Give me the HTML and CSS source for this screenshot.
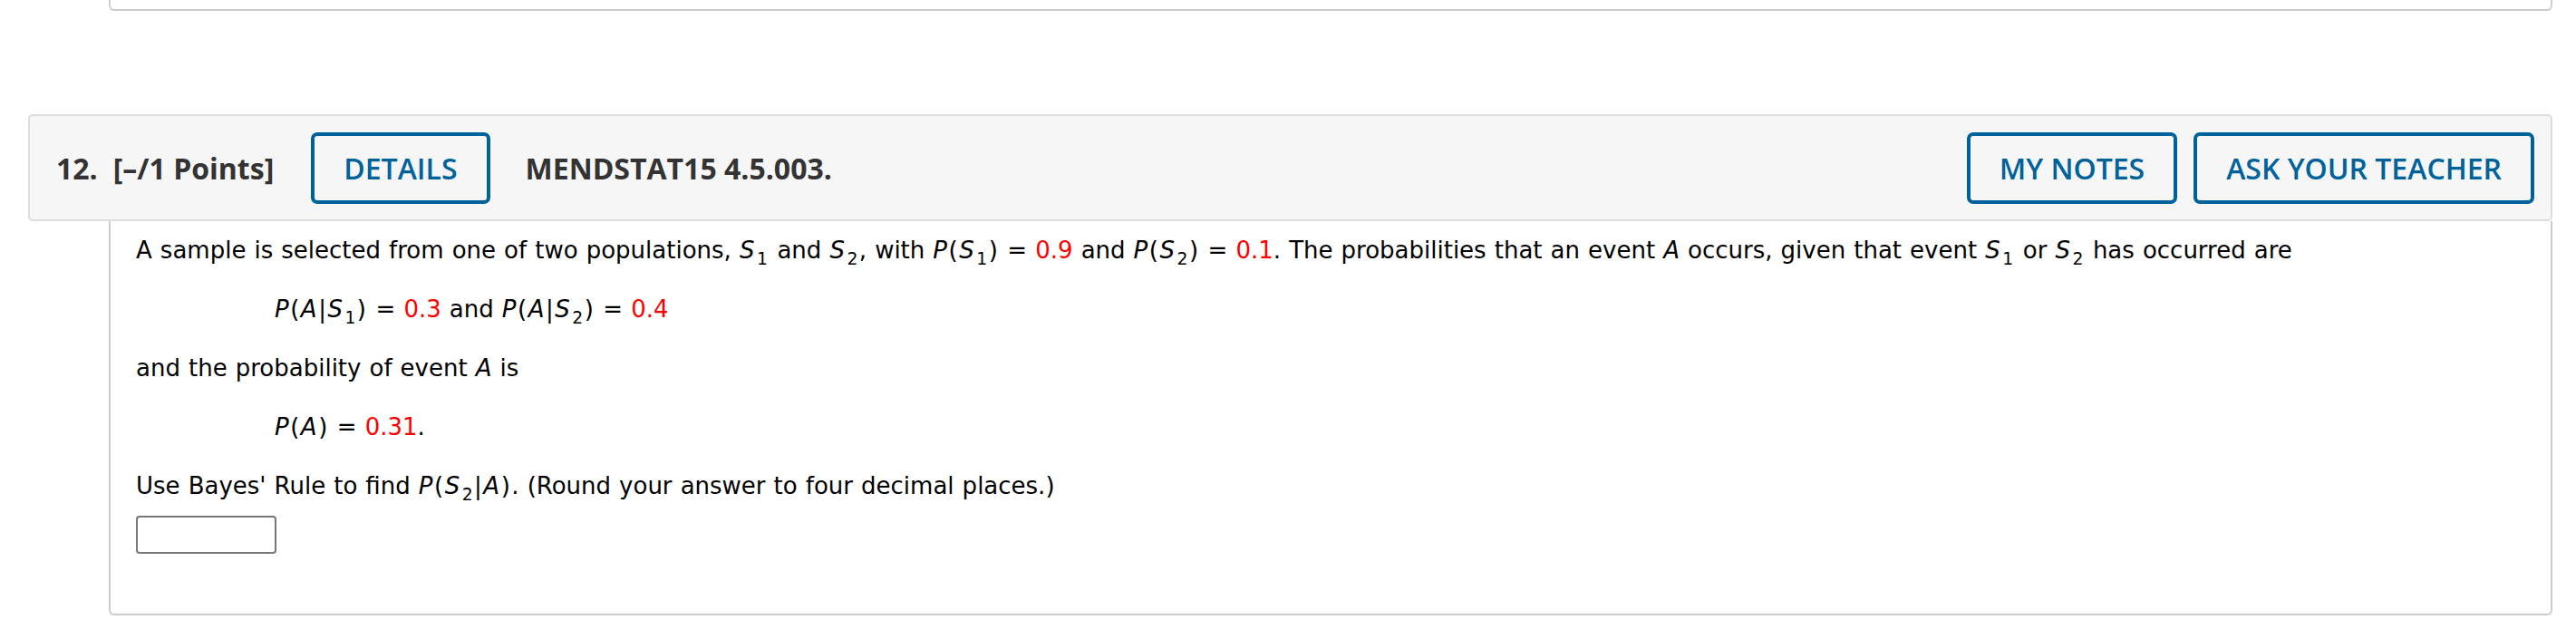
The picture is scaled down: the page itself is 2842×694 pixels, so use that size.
FILE: index.html
```html
<!DOCTYPE html>
<html>
<head>
<meta charset="utf-8">
<link rel="stylesheet" href="styles.css">
</head>
<body>
<div class="prev-card"></div>
<div class="question">
  <div class="q-header">
    <span class="q-num">12.</span>
    <span class="q-points">[&ndash;/1 Points]</span>
    <button class="btn">DETAILS</button>
    <span class="q-ref">MENDSTAT15 4.5.003.</span>
    <span class="spacer"></span>
    <button class="btn">MY NOTES</button>
    <button class="btn">ASK YOUR TEACHER</button>
  </div>
  <div class="q-body">
    <p class="line">A sample is selected from one of two populations, <span class="m"><i>S</i><sub>1</sub></span> and <span class="m"><i>S</i><sub>2</sub></span>, with <span class="m"><i>P</i>(<i>S</i><sub>1</sub>)</span> = <span class="red">0.9</span> and <span class="m"><i>P</i>(<i>S</i><sub>2</sub>)</span> = <span class="red">0.1</span>. The probabilities that an event <i>A</i> occurs, given that event <span class="m"><i>S</i><sub>1</sub></span> or <span class="m"><i>S</i><sub>2</sub></span> has occurred are</p>
    <p class="line indent"><span class="m"><i>P</i>(<i>A</i>|<i>S</i><sub>1</sub>)</span> = <span class="red">0.3</span> and <span class="m"><i>P</i>(<i>A</i>|<i>S</i><sub>2</sub>)</span> = <span class="red">0.4</span></p>
    <p class="line">and the probability of event <i>A</i> is</p>
    <p class="line indent"><span class="m"><i>P</i>(<i>A</i>)</span> = <span class="red">0.31</span>.</p>
    <p class="line">Use Bayes' Rule to find <span class="m"><i>P</i>(<i>S</i><sub>2</sub>|<i>A</i>)</span>. (Round your answer to four decimal places.)</p>
    <input class="answer" type="text">
  </div>
</div>
</body>
</html>
```

FILE: styles.css
```css
html, body {
  margin: 0;
  padding: 0;
  background: #ffffff;
}

.prev-card {
  margin-left: 120px;
  width: 2692px;
  height: 10px;
  border: 2px solid #cccccc;
  border-top: none;
  border-radius: 0 0 6px 6px;
}

.question {
  margin-top: 114px;
  margin-left: 31px;
  width: 2785px;
}

.q-header {
  display: flex;
  align-items: center;
  box-sizing: border-box;
  height: 118px;
  padding: 0 18px 0 29px;
  background: #f6f6f6;
  border: 2px solid #dddddd;
  border-radius: 5px;
  font-family: "Open Sans", sans-serif;
  font-size: 32px;
  font-weight: 700;
  color: #333333;
}

.q-num {
  margin-right: 17px;
}

.q-points {
  margin-right: 41px;
}

.q-ref {
  margin-left: 39px;
}

.spacer {
  flex: 1;
}

.btn {
  box-sizing: border-box;
  height: 79px;
  padding: 0 32px;
  background: transparent;
  border: 4px solid #00629b;
  border-radius: 7px;
  font-family: "Open Sans", sans-serif;
  font-size: 32px;
  font-weight: 600;
  color: #00629b;
}

.btn + .btn {
  margin-left: 18px;
}

.q-body {
  margin-left: 89px;
  box-sizing: border-box;
  height: 435px;
  padding: 13px 28px 0 28px;
  border: 2px solid #cccccc;
  border-top: none;
  border-radius: 0 0 6px 6px;
  font-family: "DejaVu Sans", Verdana, sans-serif;
  font-size: 26px;
  word-spacing: 0.8px;
  color: #000000;
}

.line {
  margin: 0 0 27px 0;
  line-height: 38px;
  white-space: nowrap;
}

.indent {
  padding-left: 153px;
}

.m {
  letter-spacing: 1.5px;
}

sub {
  font-size: 0.72em;
  line-height: 0;
  vertical-align: -0.4em;
  margin-left: 1px;
}

.red {
  color: #ff0000;
}

.answer {
  display: block;
  margin-top: -13px;
  box-sizing: border-box;
  width: 155px;
  height: 42px;
  border: 2px solid #777777;
  border-radius: 4px;
  background: #ffffff;
}
```
